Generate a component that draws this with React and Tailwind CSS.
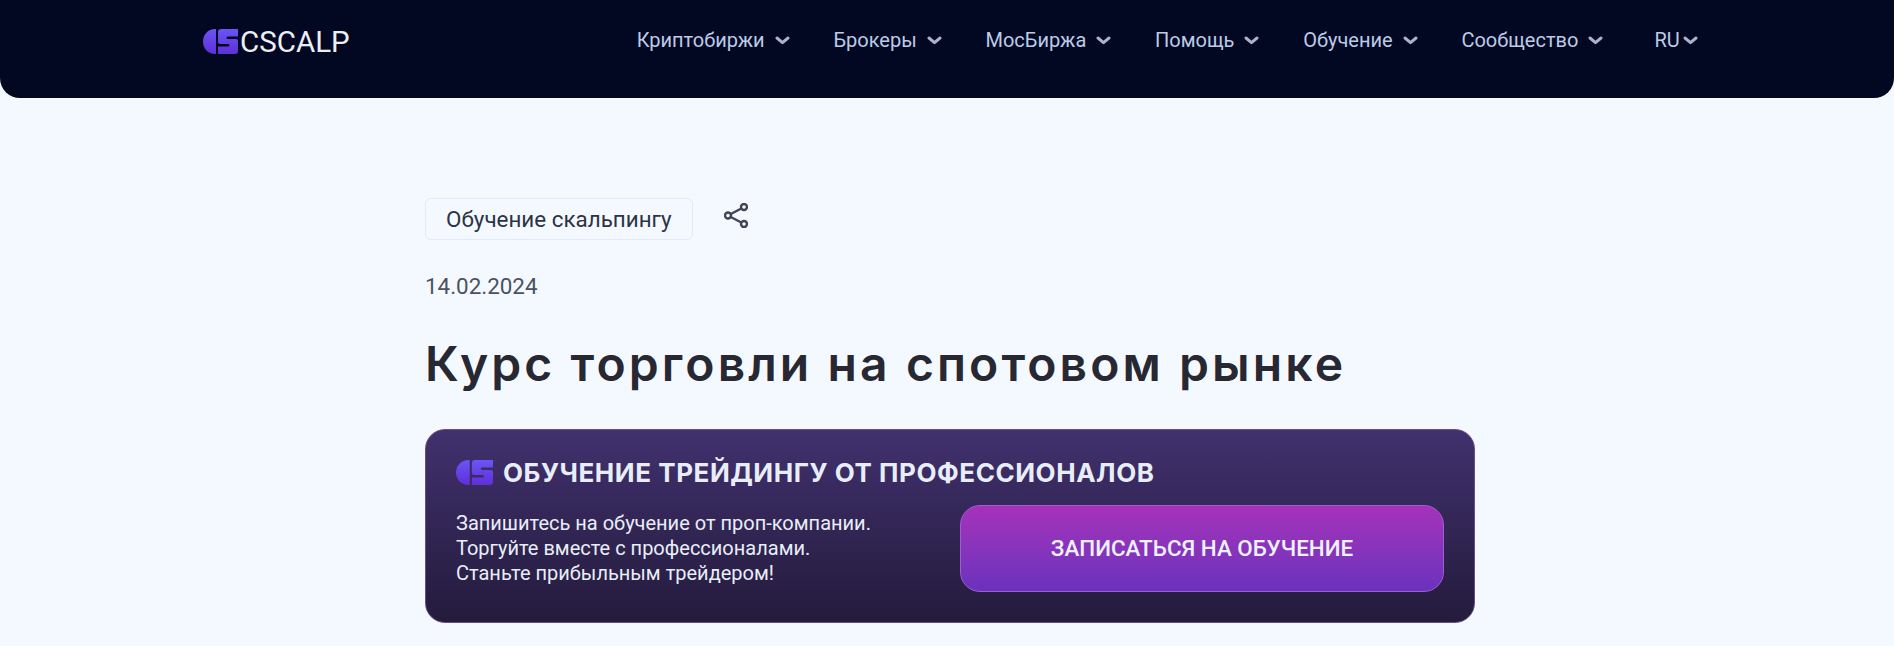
const navItems = ["Криптобиржи", "Брокеры", "МосБиржа", "Помощь", "Обучение", "Сообщество"];

// CScalp mark: half-round block plus the S block
function Logo({ className }) {
  return (
    <svg viewBox="0 0 35 25" preserveAspectRatio="none" className={className}>
      <defs>
        <linearGradient id="logoFill" x1="0" y1="0" x2="0" y2="1">
          <stop offset="0" stopColor="#6a55f5" />
          <stop offset="1" stopColor="#5f2fd8" />
        </linearGradient>
      </defs>
      <path d="M13 0V25H12C5 25 0 19.5 0 12.5S5 0 12 0Z" fill="url(#logoFill)" />
      <path
        d="M15 3Q15 0 18 0H35V7.5H25Q23.5 7.5 23.5 8.7T25 10H33Q35 10 35 12V22Q35 25 32 25H15V17.5H25Q26.5 17.5 26.5 16.3T25 15H17Q15 15 15 13Z"
        fill="url(#logoFill)"
      />
    </svg>
  );
}

function Chevron() {
  return (
    <svg viewBox="0 0 15 9" className="h-[9px] w-[15px]" fill="none" stroke="#a9b4cc" strokeWidth="3" strokeLinecap="round" strokeLinejoin="round">
      <path d="M2 2l5.5 4.6L13 2" />
    </svg>
  );
}

function App() {
  return (
    <div className="min-h-[646px] bg-[#f4f9ff] font-['Roboto',sans-serif]">
      {/* Header */}
      <header className="flex h-[98px] items-start rounded-b-[20px] bg-[#030822] pl-[203px]">
        <div className="mt-[27px] flex items-center gap-[2px]">
          <Logo className="h-[25px] w-[35px]" />
          <span className="mt-[2px] text-[29.5px] leading-[26px] text-[#eceef6]">CSCALP</span>
        </div>
        <nav className="ml-[287px] mt-[27px] flex items-center gap-[43.8px]">
          {navItems.map((item) => (
            <a key={item} className="flex items-center gap-[10px] text-[20px] leading-[26px] text-[#bccbe8]">
              {item}
              <Chevron />
            </a>
          ))}
        </nav>
        <div className="ml-[51px] mt-[27px] flex items-center gap-[3px] text-[20px] leading-[26px] text-[#bccbe8]">
          RU
          <Chevron />
        </div>
      </header>

      {/* Article head */}
      <main className="ml-[425px] w-[1050px] pt-[100px]">
        <div className="flex items-start gap-[31px]">
          <span className="rounded-[6px] border border-[#e0e8fb] px-[20px] py-[6px] text-[22.4px] leading-[28px] text-[#2c3444]">
            Обучение скальпингу
          </span>
          <svg viewBox="0 0 24 25" className="mt-[5px] h-[25px] w-[24px]" fill="none" stroke="#3d4557" strokeWidth="2.4">
            <circle cx="20" cy="4" r="3" />
            <circle cx="20" cy="21" r="3" />
            <circle cx="4" cy="12.5" r="3" />
            <path d="M6.8 11 17.3 5.5M6.8 14l10.5 5.5" />
          </svg>
        </div>
        <div className="mt-[32px] text-[22.4px] leading-[28px] text-[#4a5263]">14.02.2024</div>
        <h1 className="mt-[32px] text-[48px] font-semibold leading-[64px] tracking-[3.1px] text-[#282833] font-['Inter',sans-serif]">
          Курс торговли на спотовом рынке
        </h1>

        {/* Promo banner */}
        <section className="mt-[33px] h-[194px] rounded-[20px] border border-[#6a4f86] bg-gradient-to-b from-[#41316f] to-[#241b3c] px-[30px] pt-[30px]">
          <div className="flex items-center gap-[10px]">
            <Logo className="h-[25px] w-[37px]" />
            <h2 className="text-[26px] font-bold leading-[24px] tracking-[0.55px] text-[#e8eef8] font-['Inter',sans-serif]">
              ОБУЧЕНИЕ ТРЕЙДИНГУ ОТ ПРОФЕССИОНАЛОВ
            </h2>
          </div>
          <div className="mt-[20px] flex items-start justify-between">
            <p className="mt-[6px] text-[20px] leading-[25px] text-[#e8eef8]">
              Запишитесь на обучение от проп-компании.
              <br />
              Торгуйте вместе с профессионалами.
              <br />
              Станьте прибыльным трейдером!
            </p>
            <button className="flex h-[87px] w-[484px] items-center justify-center rounded-[20px] border border-[#9a5fd2] bg-gradient-to-b from-[#a631ba] to-[#6b31bd] text-[22.4px] font-medium text-[#eef1fa]">
              ЗАПИСАТЬСЯ НА ОБУЧЕНИЕ
            </button>
          </div>
        </section>
      </main>
    </div>
  );
}

export default App;
